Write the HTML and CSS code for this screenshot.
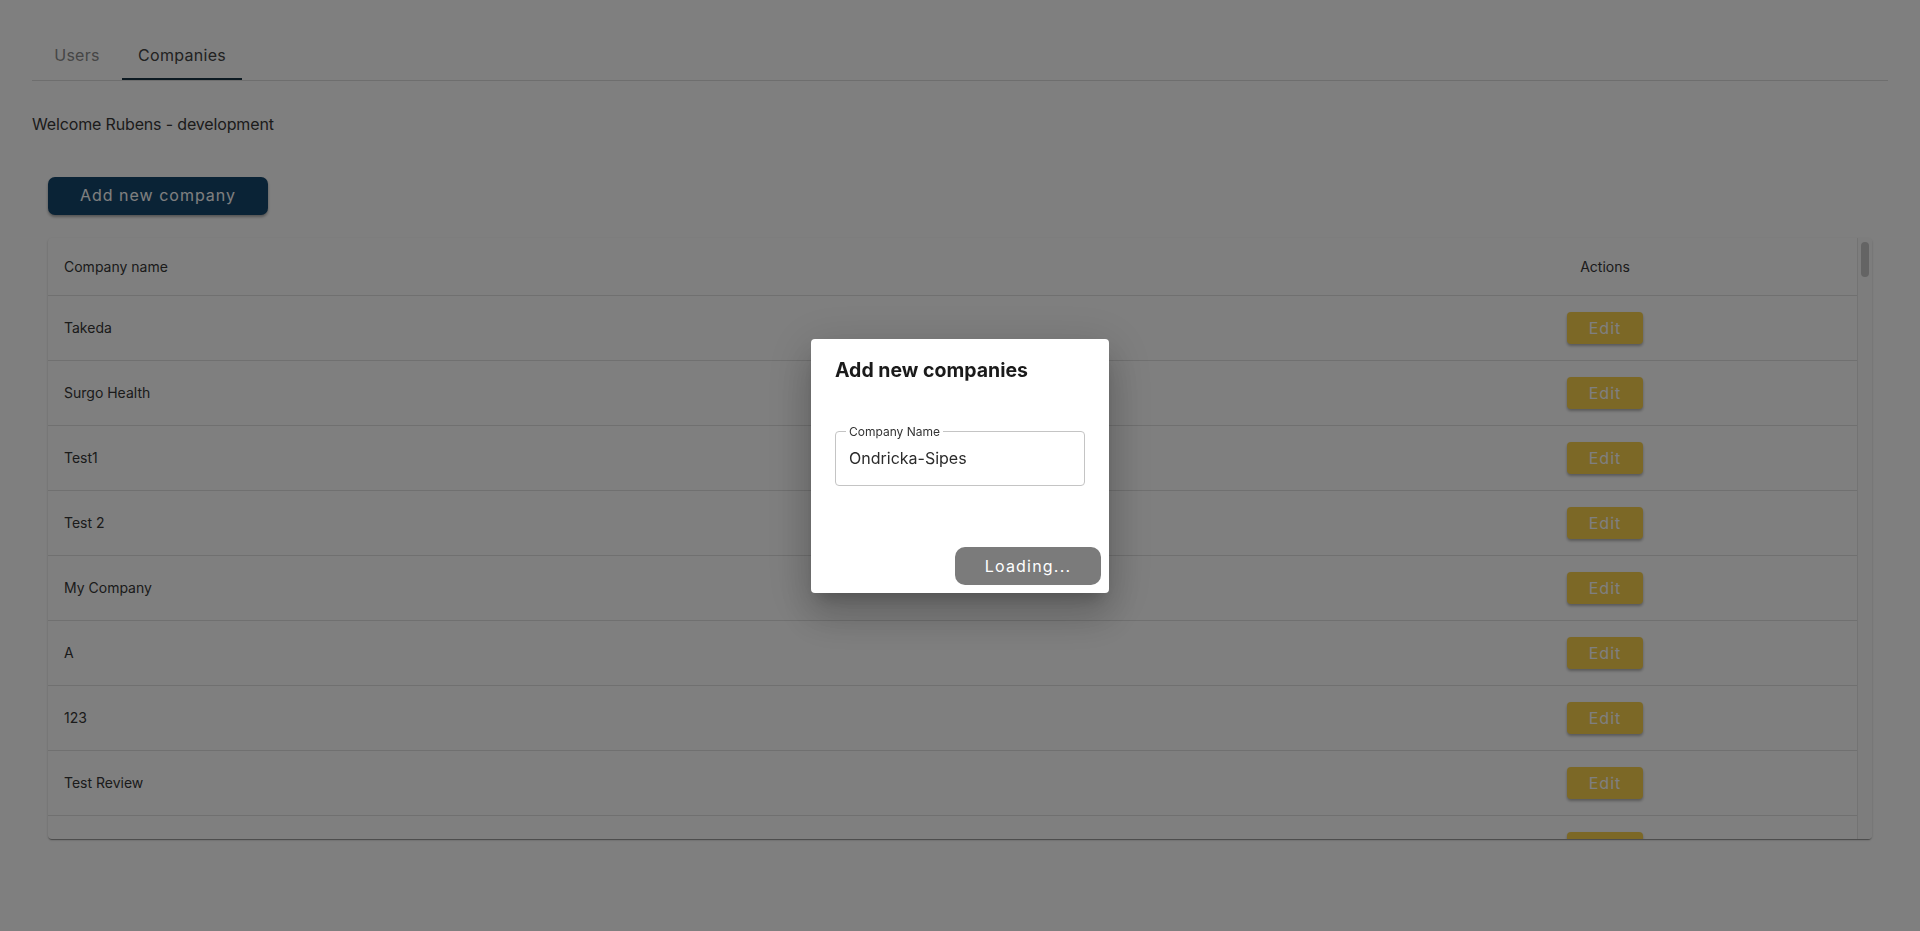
FILE: index.html
```html
<!DOCTYPE html>
<html lang="en">
<head>
<meta charset="utf-8">
<title>Companies</title>
<link rel="stylesheet" href="styles.css">
</head>
<body>
<div class="page">
  <nav class="tabs">
    <div class="tab">Users</div>
    <div class="tab tab-active">Companies</div>
  </nav>
  <p class="welcome">Welcome Rubens - development</p>
  <div class="content">
    <button class="btn-primary">Add new company</button>
    <div class="table-paper">
      <div class="table-scroll">
        <table class="grid">
          <colgroup><col><col class="col-actions"></colgroup>
          <thead>
            <tr><th class="th-name">Company name</th><th class="th-actions">Actions</th></tr>
          </thead>
          <tbody>
            <tr><td>Takeda</td><td class="td-actions"><button class="btn-edit">Edit</button></td></tr>
            <tr><td>Surgo Health</td><td class="td-actions"><button class="btn-edit">Edit</button></td></tr>
            <tr><td>Test1</td><td class="td-actions"><button class="btn-edit">Edit</button></td></tr>
            <tr><td>Test 2</td><td class="td-actions"><button class="btn-edit">Edit</button></td></tr>
            <tr><td>My Company</td><td class="td-actions"><button class="btn-edit">Edit</button></td></tr>
            <tr><td>A</td><td class="td-actions"><button class="btn-edit">Edit</button></td></tr>
            <tr><td>123</td><td class="td-actions"><button class="btn-edit">Edit</button></td></tr>
            <tr><td>Test Review</td><td class="td-actions"><button class="btn-edit">Edit</button></td></tr>
            <tr><td>&nbsp;</td><td class="td-actions"><button class="btn-edit">Edit</button></td></tr>
          </tbody>
        </table>
      </div>
      <div class="scrollbar"><div class="scroll-thumb"></div></div>
    </div>
  </div>
</div>

<div class="overlay">
  <div class="dialog">
    <h2 class="dialog-title">Add new companies</h2>
    <div class="dialog-content">
      <fieldset class="field">
        <legend class="field-label">Company Name</legend>
        <input class="field-input" type="text" value="Ondricka-Sipes">
      </fieldset>
    </div>
    <div class="dialog-actions">
      <button class="btn-loading">Loading...</button>
    </div>
  </div>
</div>
</body>
</html>
```

FILE: styles.css
```css
* { box-sizing: border-box; }

html, body {
  margin: 0;
  padding: 0;
  background: #ffffff;
  font-family: Inter, "Liberation Sans", sans-serif;
  color: #333333;
  overflow: hidden;
}

.page {
  padding: 32px 32px 0;
  height: 931px;
}

.tabs {
  display: flex;
  height: 49px;
  border-bottom: 1px solid #dcdcdc;
}

.tab {
  min-width: 90px;
  height: 48px;
  padding: 0 16px;
  display: flex;
  align-items: center;
  justify-content: center;
  font-size: 16px;
  letter-spacing: 0.3px;
  color: #8c8c8c;
  border-bottom: 2px solid transparent;
}

.tab-active {
  color: #444444;
  border-bottom-color: #1b3444;
}

.welcome {
  margin: 31px 0 0;
  font-size: 16px;
  line-height: 24px;
  letter-spacing: -0.15px;
  color: #383838;
}

.content {
  padding: 0 16px;
}

.btn-primary {
  display: block;
  margin-top: 41px;
  width: 220px;
  height: 38px;
  padding: 0 0 2px;
  border: none;
  border-radius: 7px;
  background: #14466c;
  color: #ffffff;
  font-family: Inter, "Liberation Sans", sans-serif;
  font-size: 16px;
  font-weight: 400;
  letter-spacing: 1px;
  box-shadow: 0 2px 3px rgba(0,0,0,0.35);
}

.table-paper {
  margin-top: 23px;
  height: 601px;
  display: flex;
  background: #ffffff;
  border-radius: 4px;
  overflow: hidden;
  box-shadow: 0 2px 1px -1px rgba(0,0,0,0.25), 0 1px 1px 0 rgba(0,0,0,0.16), 0 1px 3px 0 rgba(0,0,0,0.14);
}

.table-scroll {
  flex: 1;
  overflow: hidden;
}

.grid {
  width: 100%;
  border-collapse: collapse;
  font-size: 14px;
}

.col-actions { width: 504px; }

.grid th,
.grid td {
  padding: 16px;
  line-height: 24px;
  border-bottom: 1px solid #e0e0e0;
  font-weight: 400;
  color: #363636;
  vertical-align: middle;
}

.grid th {
  padding-top: 17px;
}

.th-name { text-align: left; }
.th-actions, .td-actions { text-align: center; }

.btn-edit {
  display: inline-block;
  vertical-align: middle;
  width: 76px;
  height: 32px;
  padding: 0;
  border: none;
  border-radius: 4px;
  background: #f9d04c;
  color: #ffffff;
  font-family: Inter, "Liberation Sans", sans-serif;
  font-size: 16px;
  letter-spacing: 1px;
  box-shadow: 0 2px 3px rgba(0,0,0,0.3);
}

.scrollbar {
  width: 15px;
  flex: none;
  border-left: 1px solid #e6e6e6;
  background: #fafafa;
  padding: 4px 3px 0 3px;
}

.scroll-thumb {
  width: 8px;
  height: 35px;
  border-radius: 4px;
  background: #c8c8c8;
}

.overlay {
  position: fixed;
  inset: 0;
  background: rgba(0,0,0,0.5);
  display: flex;
  align-items: center;
  justify-content: center;
}

.dialog {
  width: 298px;
  background: #ffffff;
  border-radius: 4px;
  box-shadow: 0 11px 15px -7px rgba(0,0,0,0.2), 0 24px 38px 3px rgba(0,0,0,0.14), 0 9px 46px 8px rgba(0,0,0,0.12);
}

.dialog-title {
  margin: 0;
  padding: 15px 24px 17px;
  font-size: 19.5px;
  line-height: 32px;
  font-weight: 700;
  color: #1a1a1a;
}

.dialog-content {
  padding: 23px 24px 0;
}

.field {
  margin: 0;
  padding: 0 13px 15px;
  border: 1px solid #c4c4c4;
  border-radius: 4px;
  min-width: 0;
}

.field-label {
  padding: 0 3px;
  margin-left: -3px;
  font-size: 12px;
  line-height: 12px;
  color: #333333;
}

.field-input {
  display: block;
  width: 100%;
  margin-top: 8px;
  padding: 0;
  height: 24px;
  border: none;
  outline: none;
  background: transparent;
  font-family: Inter, "Liberation Sans", sans-serif;
  font-size: 16px;
  color: #2b2b2b;
}

.dialog-actions {
  display: flex;
  justify-content: flex-end;
  padding: 8px;
  margin-top: 53px;
}

.btn-loading {
  width: 146px;
  height: 38px;
  padding: 0;
  border: none;
  border-radius: 10px;
  background: #7b7b7b;
  color: #ffffff;
  font-family: Inter, "Liberation Sans", sans-serif;
  font-size: 16px;
  letter-spacing: 1.2px;
}
```
